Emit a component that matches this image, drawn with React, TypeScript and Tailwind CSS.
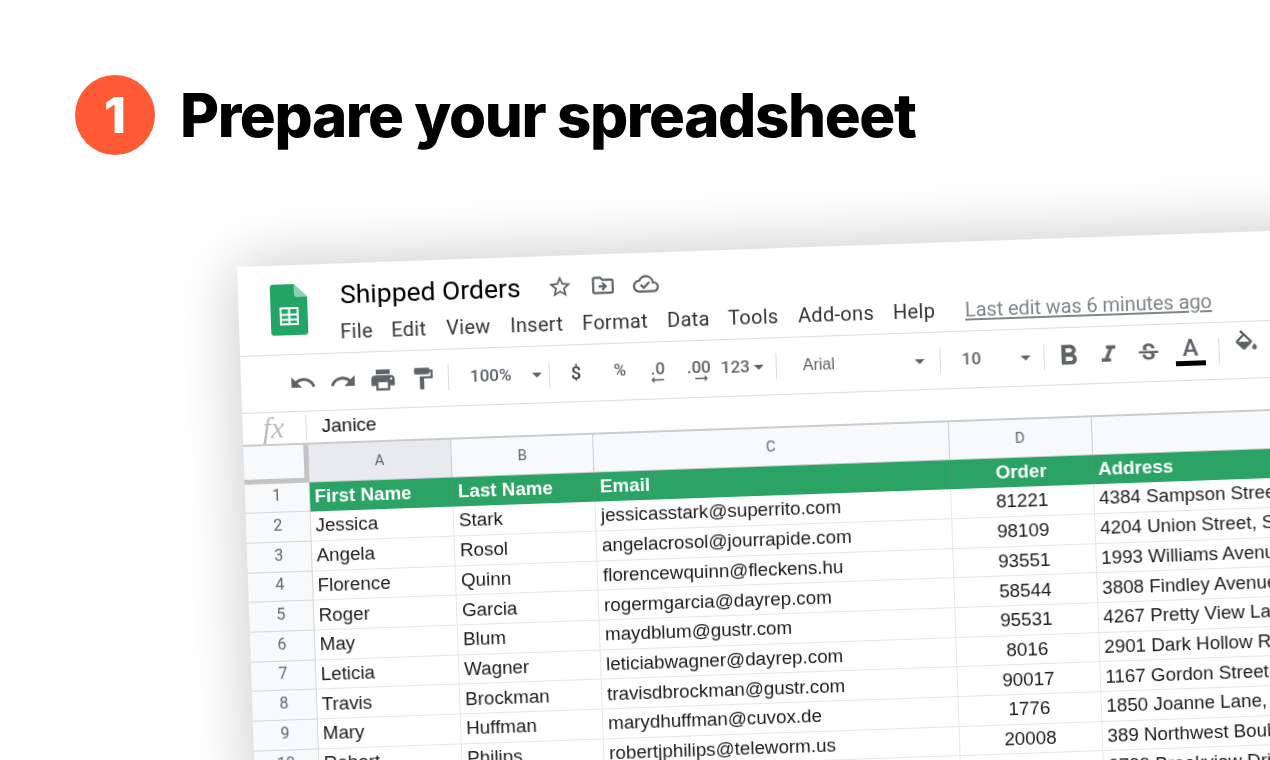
import {
  MdRedo,
  MdUndo,
  MdPrint,
  MdFormatPaint,
  MdStarBorder,
  MdOutlineDriveFileMove,
  MdOutlineCloudDone,
  MdFormatBold,
  MdFormatItalic,
  MdStrikethroughS,
  MdArrowDropDown,
  MdArrowRightAlt,
} from 'react-icons/md'

const arial = 'font-["Liberation_Sans",Arial,sans-serif]'
const cols = 'grid grid-cols-[64.5px_143.5px_142px_355.5px_143px_400px]'

const menu = [
  ['File', 'w-[51px]'],
  ['Edit', 'w-[55px]'],
  ['View', 'w-[64px]'],
  ['Insert', 'w-[72px]'],
  ['Format', 'w-[85px]'],
  ['Data', 'w-[61px]'],
  ['Tools', 'w-[70px]'],
  ['Add-ons', 'w-[95px]'],
  ['Help', 'w-[72px]'],
]

const rows = [
  ['Jessica', 'Stark', 'jessicasstark@superrito.com', '81221', '4384 Sampson Street'],
  ['Angela', 'Rosol', 'angelacrosol@jourrapide.com', '98109', '4204 Union Street, S'],
  ['Florence', 'Quinn', 'florencewquinn@fleckens.hu', '93551', '1993 Williams Avenue'],
  ['Roger', 'Garcia', 'rogermgarcia@dayrep.com', '58544', '3808 Findley Avenue'],
  ['May', 'Blum', 'maydblum@gustr.com', '95531', '4267 Pretty View La'],
  ['Leticia', 'Wagner', 'leticiabwagner@dayrep.com', '8016', '2901 Dark Hollow R'],
  ['Travis', 'Brockman', 'travisdbrockman@gustr.com', '90017', '1167 Gordon Street'],
  ['Mary', 'Huffman', 'marydhuffman@cuvox.de', '1776', '1850 Joanne Lane,'],
  ['Robert', 'Philips', 'robertjphilips@teleworm.us', '20008', '389 Northwest Boul'],
  ['Joseph', 'Ward', 'josephward@rhyta.com', '60601', '2799 Brookview Dri'],
]

function Sep() {
  return <div className="w-px h-[26px] bg-[#dadce0] shrink-0" />
}

function Caret({ className }: { className: string }) {
  return <MdArrowDropDown className={`text-[#5f6368] text-[24px] shrink-0 ${className}`} />
}

function SheetsLogo() {
  return (
    <svg viewBox="0 0 37 51" className="w-[37px] h-[51px] shrink-0">
      <path d="M3 0H24L37 13V48a3 3 0 0 1-3 3H3a3 3 0 0 1-3-3V3a3 3 0 0 1 3-3Z" fill="#23a566" />
      <path d="M24 0L37 13H27a3 3 0 0 1-3-3Z" fill="#8ed1b1" />
      <path
        d="M9 23H28V41H9Z M11 25V29.5H17.5V25Z M19.5 25V29.5H26V25Z M11 31.5V34.5H17.5V31.5Z M19.5 31.5V34.5H26V31.5Z M11 36.5V39H17.5V36.5Z M19.5 36.5V39H26V36.5Z"
        fill="#fff"
        fillRule="evenodd"
      />
    </svg>
  )
}

function FillIcon() {
  return (
    <svg viewBox="0 0 24 24" className="w-[28px] h-[28px] -mt-[12px] fill-[#5f6368]">
      <path d="M16.56 8.94L7.62 0 6.21 1.41l2.38 2.38-5.15 5.15c-.59.59-.59 1.54 0 2.12l5.5 5.5c.29.29.68.44 1.06.44s.77-.15 1.06-.44l5.5-5.5c.59-.58.59-1.53 0-2.12zM5.21 10L10 5.21 14.79 10H5.21zM19 11.5s-2 2.17-2 3.5c0 1.1.9 2 2 2s2-.9 2-2c0-1.33-2-3.5-2-3.5z" />
    </svg>
  )
}

function Toolbar() {
  const icon = 'w-[40px] flex justify-center text-[#5f6368] shrink-0'
  return (
    <div className="h-[57px] flex items-center pl-[42px] border-b border-[#dadce0] text-[#5f6368] font-['Roboto',sans-serif] font-medium">
      <div className={icon}><MdUndo className="text-[28px]" /></div>
      <div className={icon}><MdRedo className="text-[28px]" /></div>
      <div className={icon}><MdPrint className="text-[28px]" /></div>
      <div className={icon}><MdFormatPaint className="text-[26px]" /></div>
      <div className="w-[5px]" />
      <Sep />
      <span className="ml-[21px] w-[44px] text-[17px]">100%</span>
      <Caret className="ml-[11px]" />
      <Sep />
      <span className="w-[52px] -mt-[2px] text-center text-[18px] text-[#444]">$</span>
      <span className="w-[36px] -mt-[2px] text-center text-[17px]">%</span>
      <div className="w-[40px] -mt-[2px] relative text-center text-[17px]">
        .0
        <MdArrowRightAlt className="absolute left-[10px] top-[14px] text-[19px] rotate-180" />
      </div>
      <div className="w-[42px] -mt-[2px] relative text-center text-[17px]">
        .00
        <MdArrowRightAlt className="absolute left-[14px] top-[14px] text-[19px]" />
      </div>
      <span className="ml-[1px] text-[17px]">123</span>
      <Caret className="-ml-[3px] mr-[5px]" />
      <Sep />
      <span className={`ml-[26px] w-[105px] text-[16px] ${arial}`}>Arial</span>
      <Caret className="mr-[8px]" />
      <Sep />
      <span className="ml-[21px] w-[52px] text-[17px]">10</span>
      <Caret className="mr-[6px]" />
      <Sep />
      <div className="w-[4px]" />
      <div className={icon}><MdFormatBold className="text-[34px]" /></div>
      <div className={icon}><MdFormatItalic className="text-[28px]" /></div>
      <div className={icon}><MdStrikethroughS className="text-[26px]" /></div>
      <div className="w-[40px] ml-[2px] flex flex-col items-center shrink-0 leading-none">
        <span className="text-[24px] -mt-[3px]">A</span>
        <div className="w-[30px] h-[5px] bg-black mt-[1px]" />
      </div>
      <div className="w-[8px]" />
      <Sep />
      <div className={`${icon} ml-[7px]`}><FillIcon /></div>
    </div>
  )
}

function DataRow({ n, row }: { n: number; row: string[] }) {
  const cell = 'px-[5px] border-r border-b border-[#e6e6e6] flex items-center whitespace-nowrap overflow-hidden'
  return (
    <div className={`${cols} h-[29.7px] text-[18.8px] text-[#1c1c1c] ${arial}`}>
      <div className="bg-[#f8f9fa] border-r border-b border-[#d4d6d9] flex items-center justify-center pb-[3px] text-[16px] text-[#666] font-['Roboto',sans-serif]">
        {n}
      </div>
      <div className={cell}>{row[0]}</div>
      <div className={cell}>{row[1]}</div>
      <div className={cell}>{row[2]}</div>
      <div className={`${cell} justify-center`}>{row[3]}</div>
      <div className={cell}>{row[4]}</div>
    </div>
  )
}

export default function App() {
  const colHead = 'bg-[#f8f9fa] border-r border-b border-[#c9ccd0] flex items-center justify-center text-[15px] text-[#666]'
  const green = 'px-[5px] bg-[#2ba364] text-white border-r border-[#3f9f6d] flex items-center whitespace-nowrap font-bold'
  return (
    <div className="w-[1270px] h-[760px] overflow-hidden bg-white">
      <div className="flex items-center pl-[75px] pt-[75px]">
        <div className="w-[80px] h-[80px] rounded-full bg-[#ff5a33] flex items-center justify-center text-white font-['Inter',sans-serif] font-extrabold text-[50px] leading-none">
          1
        </div>
        <h1 className="ml-[25px] font-['Inter',sans-serif] font-extrabold text-[60px] leading-none text-black tracking-[-1.4px]">
          Prepare your spreadsheet
        </h1>
      </div>

      <div className="ml-[237px] mt-[112px] w-[1200px] origin-top-left rotate-[-2deg] bg-white shadow-[0_0_60px_rgba(0,0,0,0.22)] blur-[0.35px]">
        {/* title bar */}
        <div className="h-[90px] flex pl-[32px] pt-[19px] border-b border-[#dadce0]">
          <SheetsLogo />
          <div className="ml-[33px] -mt-[15px] font-['Roboto',sans-serif]">
            <div className="h-[54px] flex items-center">
              <span className="text-[26.5px] text-black">Shipped Orders</span>
              <MdStarBorder className="ml-[26px] text-[26px] text-[#5f6368]" />
              <MdOutlineDriveFileMove className="ml-[17px] text-[26px] text-[#5f6368]" />
              <MdOutlineCloudDone className="ml-[17px] text-[26px] text-[#5f6368]" />
            </div>
            <div className="h-[20px] -ml-[1px] flex items-center text-[20px] text-[#333] tracking-[0.3px]">
              {menu.map(([label, w]) => (
                <span key={label} className={w}>{label}</span>
              ))}
              <span className="text-[#80868b] underline underline-offset-2 tracking-[-0.1px]">Last edit was 6 minutes ago</span>
            </div>
          </div>
        </div>

        <Toolbar />

        {/* formula bar */}
        <div className="h-[33px] flex items-center border-b-2 border-[#c9ccd0]">
          <span className="w-[64px] h-[26px] pl-[20px] font-['Liberation_Serif',serif] italic text-[30px] text-[#bbb] border-r border-[#dadce0] leading-[24px]">
            fx
          </span>
          <span className={`ml-[15px] text-[19px] text-[#111] ${arial}`}>Janice</span>
        </div>

        {/* column heads */}
        <div className={`${cols} h-[37.5px] font-['Roboto',sans-serif]`}>
          <div className="bg-[#f8f9fa] border-r-[5px] border-b-[5px] border-[#c4c4c4]" />
          <div className={`${colHead} !bg-[#e8eaed]`}>A</div>
          <div className={colHead}>B</div>
          <div className={colHead}>C</div>
          <div className={colHead}>D</div>
          <div className={colHead} />
        </div>

        {/* green header row */}
        <div className={`${cols} h-[29.7px] text-[18.8px] ${arial}`}>
          <div className="bg-[#f8f9fa] border-r border-b border-[#d4d6d9] flex items-center justify-center pb-[3px] text-[16px] text-[#666] font-['Roboto',sans-serif]">
            1
          </div>
          <div className={green}>First Name</div>
          <div className={green}>Last Name</div>
          <div className={green}>Email</div>
          <div className={`${green} justify-center`}>Order</div>
          <div className={green}>Address</div>
        </div>

        {rows.map((row, i) => (
          <DataRow key={row[0]} n={i + 2} row={row} />
        ))}
      </div>
    </div>
  )
}
